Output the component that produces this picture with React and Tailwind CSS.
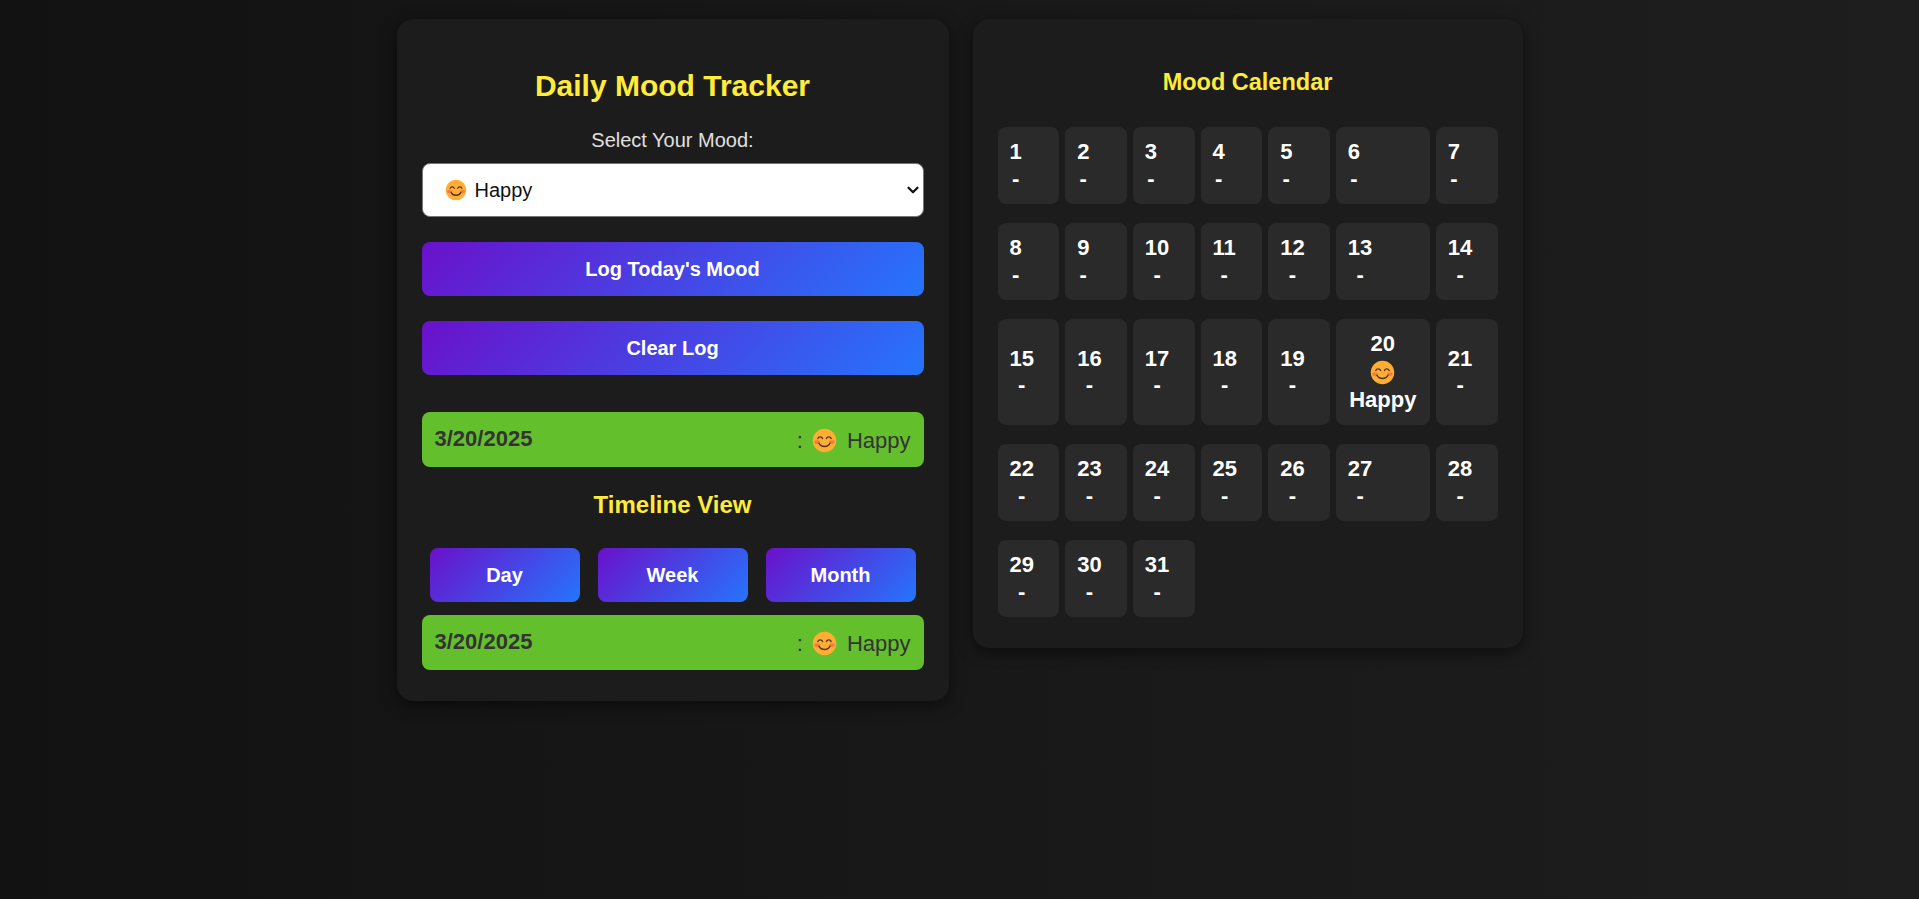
import { ChevronDown } from 'lucide-react';

function Smile({ className }) {
  return (
    <svg viewBox="0 0 32 32" className={className}>
      <circle cx="16" cy="16" r="15" fill="#FFAE33" />
      <ellipse cx="6.5" cy="18" rx="3.6" ry="2.4" fill="#F4664A" opacity="0.75" />
      <ellipse cx="25.5" cy="18" rx="3.6" ry="2.4" fill="#F4664A" opacity="0.75" />
      <path d="M7.5 13.5c1-2.8 5-2.8 6 0M18.5 13.5c1-2.8 5-2.8 6 0" fill="none" stroke="#4A3520" strokeWidth="1.8" strokeLinecap="round" />
      <path d="M9 19.5c2.5 5.5 11.5 5.5 14 0" fill="none" stroke="#4A3520" strokeWidth="1.9" strokeLinecap="round" />
    </svg>
  );
}

function GradientButton({ children, className }) {
  return (
    <button className={`h-[54px] rounded-[8px] bg-[linear-gradient(135deg,#6a11cb,#2575fc)] text-[20px] font-bold text-white ${className}`}>
      {children}
    </button>
  );
}

function LogEntry({ className }) {
  return (
    <div className={`flex h-[55px] items-start justify-between rounded-[8px] bg-[#64bf2d] px-[13px] pt-[12px] text-[#333333] ${className}`}>
      <strong className="mt-[2px] text-[22px] leading-[25px]">3/20/2025</strong>
      <span className="flex items-center text-[22px] leading-[33px]">
        : <Smile className="ml-[9px] mr-[10px] size-[25px]" /> Happy
      </span>
    </div>
  );
}

function DayCell({ day }) {
  const logged = day === 20;
  return (
    <div className="flex flex-col justify-center rounded-[8px] bg-[#2a2a2a] p-[12px] text-[22px] font-bold leading-[26.5px] text-white">
      <div className={logged ? 'min-w-[70px] text-center' : 'w-fit text-center'}>
        <div>{day}</div>
        {logged ? (
          <>
            <Smile className="mx-auto my-[2px] size-[25px]" />
            <div>Happy</div>
          </>
        ) : (
          <div>-</div>
        )}
      </div>
    </div>
  );
}

export default function App() {
  const days = Array.from({ length: 31 }, (_, i) => i + 1);

  return (
    <div className="min-h-[899px] bg-[linear-gradient(90deg,#121212,#1e1e1e)] font-['Liberation_Sans',Arial,sans-serif]">
      <div className="flex items-start justify-center gap-[24px] pt-[19px]">
        {/* Tracker */}
        <div className="flex h-[682px] w-[552px] flex-col rounded-[16px] bg-[#1c1c1c] px-[25px] pt-[49px] shadow-[0_4px_15px_rgba(0,0,0,0.5)]">
          <h1 className="text-center text-[30px] font-bold leading-[36px] text-[#ffeb3b]">Daily Mood Tracker</h1>
          <label className="mt-[22px] text-center text-[20px] leading-[28px] text-[#e0e0e0]">Select Your Mood:</label>
          <div className="mt-[9px] flex h-[54px] items-center rounded-[8px] border border-[#767676] bg-white pl-[22px] pr-[1px] text-[20px] text-[#111111]">
            <Smile className="mr-[8px] size-[22px]" />
            Happy
            <ChevronDown className="ml-auto size-[18px]" strokeWidth={3} />
          </div>
          <GradientButton className="mt-[25px]">Log Today's Mood</GradientButton>
          <GradientButton className="mt-[25px]">Clear Log</GradientButton>
          <LogEntry className="mt-[37px]" />
          <h2 className="mt-[24px] text-center text-[24px] font-bold leading-[28px] text-[#ffeb3b]">Timeline View</h2>
          <div className="mt-[29px] flex justify-between px-[8px]">
            <GradientButton className="w-[150px]">Day</GradientButton>
            <GradientButton className="w-[150px]">Week</GradientButton>
            <GradientButton className="w-[150px]">Month</GradientButton>
          </div>
          <LogEntry className="mt-[13px]" />
        </div>

        {/* Calendar */}
        <div className="w-[550px] rounded-[16px] bg-[#1c1c1c] px-[25px] pb-[31px] pt-[49px] shadow-[0_4px_15px_rgba(0,0,0,0.5)]">
          <h2 className="text-center text-[23.5px] font-bold leading-[28px] text-[#ffeb3b]">Mood Calendar</h2>
          <div className="mt-[31px] grid grid-cols-[repeat(7,1fr)] gap-x-[6px] gap-y-[19px]">
            {days.map((day) => (
              <DayCell key={day} day={day} />
            ))}
          </div>
        </div>
      </div>
    </div>
  );
}
